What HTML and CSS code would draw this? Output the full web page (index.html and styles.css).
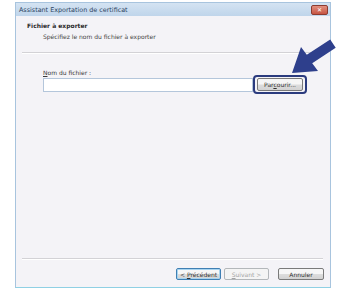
FILE: index.html
```html
<!DOCTYPE html>
<html lang="fr">
<head>
    <meta charset="UTF-8">
    <title>Assistant Exportation de certificat</title>
    <link rel="stylesheet" href="styles.css">
</head>
<body>
    <div class="window">
        <div class="titlebar">
            <span class="title">Assistant Exportation de certificat</span>
            <span class="close">&#x2715;</span>
        </div>

        <div class="header">
            <div class="header-title">Fichier à exporter</div>
            <div class="header-sub">Spécifiez le nom du fichier à exporter</div>
        </div>
        <div class="separator"></div>

        <div class="content">
            <label class="field-label" for="fileName"><u>N</u>om du fichier :</label>
            <div class="field-row">
                <input type="text" id="fileName" class="file-input">
                <div class="highlight">
                    <button class="btn browse">Par<u>c</u>ourir...</button>
                </div>
            </div>
        </div>

        <div class="separator"></div>
        <div class="footer">
            <button class="btn default">&lt; <u>P</u>récédent</button>
            <button class="btn disabled"><u>S</u>uivant &gt;</button>
            <button class="btn cancel">Annuler</button>
        </div>
    </div>

    <!-- callout arrow pointing at the browse button -->
    <svg class="arrow" width="347" height="290" viewBox="0 0 347 290">
        <polygon points="292,73 301,47 306.8,54.8 330.2,39.4 335.7,47.8 312.2,63.2 318,71" fill="#2e3f8c"/>
    </svg>
</body>
</html>
```

FILE: styles.css
```css
body {
    margin: 0;
    width: 347px;
    height: 290px;
    background: #ffffff;
    font-family: "DejaVu Sans", Tahoma, sans-serif;
    position: relative;
    overflow: hidden;
}
.window {
    margin: 2px 0 0 15px;
    width: 316px;
    height: 286px;
    box-sizing: border-box;
    border: 1px solid #a8c4de;
    border-bottom-color: #8fd0e4;
    background: #f4f3f7;
    display: flex;
    flex-direction: column;
}
.titlebar {
    height: 13px;
    background: linear-gradient(#d4e3f2, #bfd5eb);
    display: flex;
    align-items: center;
    justify-content: space-between;
    padding: 0 2px 0 3px;
    font-size: 6.4px;
    color: #2a3f5e;
}
.close {
    width: 17px;
    height: 10px;
    box-sizing: border-box;
    border: 1px solid #8c3b30;
    border-radius: 2px;
    background: linear-gradient(#e2907f, #c65443);
    color: #ffffff;
    font-size: 6px;
    font-weight: bold;
    line-height: 8px;
    text-align: center;
}
.header {
    padding: 6px 0 0 11px;
    font-size: 6px;
    line-height: 8px;
    color: #2a2a2a;
}
.header-title {
    font-weight: bold;
}
.header-sub {
    margin-top: 3px;
    padding-left: 16px;
    color: #444444;
}
.separator {
    margin: 11px 7px 0 6px;
    height: 1px;
    background: #d3d2d6;
    border-bottom: 1px solid #ffffff;
}
.content {
    flex: 1;
    padding: 15px 0 0 27px;
}
.field-label {
    display: block;
    font-size: 6px;
    line-height: 8px;
    color: #3a3a3a;
}
.field-row {
    display: flex;
    align-items: center;
    margin-top: -2px;
}
.file-input {
    width: 210px;
    height: 14px;
    box-sizing: border-box;
    border: 1px solid #b4c6db;
    background: #ffffff;
    margin: 1px 0 0 0;
    padding: 0 3px;
}
.highlight {
    width: 54px;
    height: 19px;
    box-sizing: border-box;
    border: 2px solid #2b3b7e;
    border-radius: 4px;
    display: flex;
    align-items: center;
    justify-content: center;
}
.btn {
    font-family: "DejaVu Sans", Tahoma, sans-serif;
    font-size: 6px;
    height: 12px;
    width: 45px;
    padding: 0;
    box-sizing: border-box;
    border: 1px solid #7a7a7a;
    border-radius: 2px;
    background: linear-gradient(#f6f6f6 45%, #dcdcdc 55%, #d2d2d2);
    color: #333333;
    cursor: pointer;
}
.browse {
    width: 46px;
    height: 13px;
}
.separator + .footer {
    margin-top: 8px;
}
.footer {
    display: flex;
    justify-content: flex-end;
    padding: 0 6px 7px 0;
}
.default {
    border-color: #3f7fb3;
    box-shadow: inset 0 0 0 1px #a8d4f0;
    margin-right: 3px;
}
.disabled {
    border-color: #b3b7ba;
    background: #f4f4f4;
    color: #a3a3a3;
    margin-right: 9px;
}
.cancel {
    width: 46px;
}
.arrow {
    position: absolute;
    left: 0;
    top: 0;
    pointer-events: none;
}
```
